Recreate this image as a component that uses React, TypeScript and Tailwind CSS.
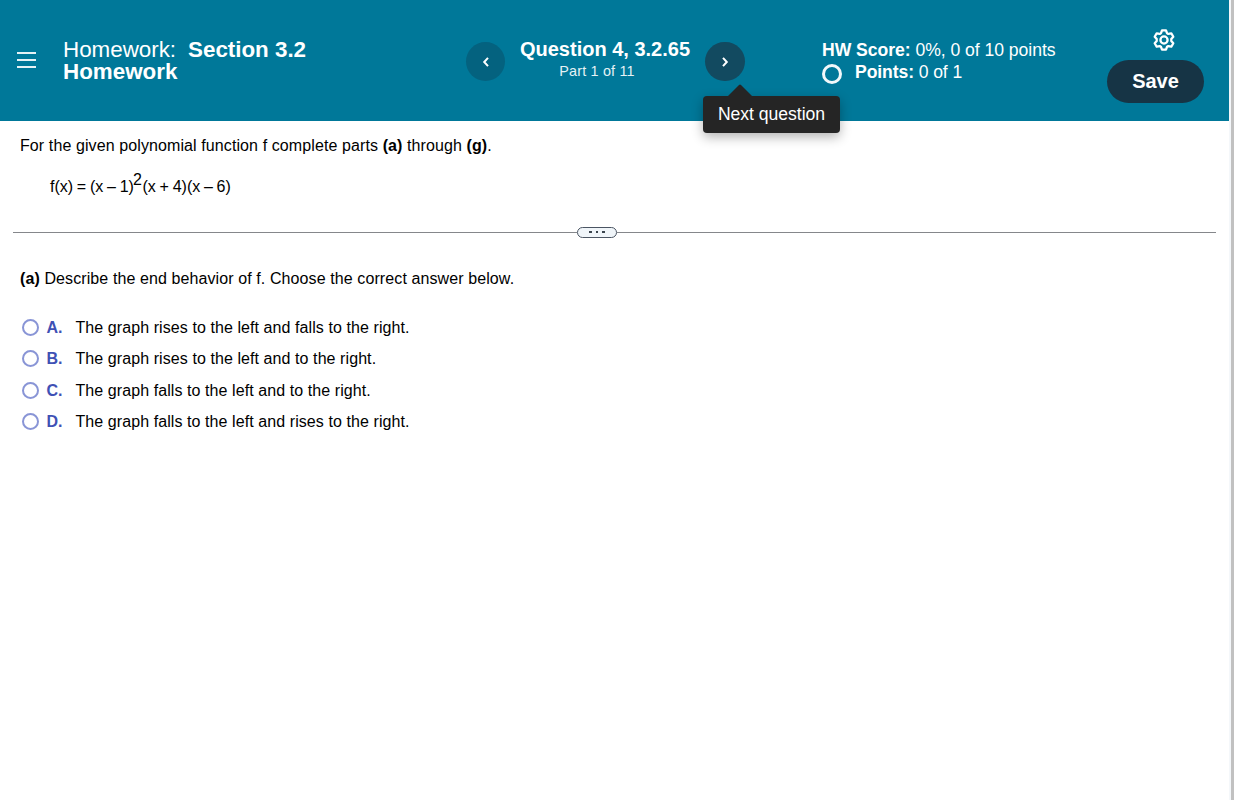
import React from 'react';

const choices = [
  { letter: 'A', text: 'The graph rises to the left and falls to the right.' },
  { letter: 'B', text: 'The graph rises to the left and to the right.' },
  { letter: 'C', text: 'The graph falls to the left and to the right.' },
  { letter: 'D', text: 'The graph falls to the left and rises to the right.' },
];

function GearIcon() {
  return (
    <svg className="w-6 h-6" viewBox="0 0 24 24" fill="none" stroke="currentColor" strokeWidth="2.3" strokeLinejoin="round">
      <path d="M10 2.300h4l1 2.900 1.300.7 3-.6 2 3.500-2 2.300v1.800l2 2.300-2 3.500-3-.6-1.300.7-1 2.900h-4l-1-2.900-1.300-.7-3 .6-2-3.500 2-2.300v-1.800l-2-2.300 2-3.500 3 .6 1.300-.7z" />
      <circle cx="12" cy="12" r="3.600" />
    </svg>
  );
}

function Header() {
  return (
    <header className="h-[121px] bg-[#007899] text-white flex items-start">
      <button className="mt-[52px] ml-[17px] w-[19px] flex flex-col gap-[5px]" aria-label="Menu">
        <span className="h-[2px] w-full bg-white/90" />
        <span className="h-[2px] w-full bg-white/90" />
        <span className="h-[2px] w-full bg-white/90" />
      </button>

      <h1 className="mt-[39px] ml-[27px] w-[403px] text-[22.4px] leading-[22px] tracking-[-0.02px]">
        Homework:<span className="ml-3 font-bold">Section 3.2</span>
        <br />
        <span className="font-bold">Homework</span>
      </h1>

      <button className="mt-[42px] w-[39px] h-[39px] rounded-full bg-[#04627f] flex items-center justify-center" aria-label="Previous question">
        <svg className="w-2 h-3" viewBox="0 0 8 12" fill="none" stroke="currentColor" strokeWidth="2">
          <path d="M6 1.800 2.200 6 6 10.200" />
        </svg>
      </button>

      <div className="mt-[37px] w-[200px] text-center whitespace-nowrap">
        <div className="text-xl leading-6 font-bold">Question 4, 3.2.65</div>
        <div className="mr-4 mt-px text-[14.4px] leading-[18px] tracking-[0.18px] text-[#e6f2f5]">Part 1 of 11</div>
      </div>

      <div className="relative mt-[42px]">
        <button className="w-10 h-[39px] rounded-full bg-[#124a60] flex items-center justify-center" aria-label="Next question">
          <svg className="w-2 h-3" viewBox="0 0 8 12" fill="none" stroke="currentColor" strokeWidth="2">
            <path d="M2 1.800 5.800 6 2 10.200" />
          </svg>
        </button>
        <div className="absolute top-[54px] left-[-2px] w-[137px] h-[37px] rounded bg-[#252525] shadow-[0_4px_12px_rgba(0,0,0,0.3)] flex items-center justify-center whitespace-nowrap text-[17.6px] tracking-[-0.03px]">
          <svg className="absolute -top-3 left-[25px] w-6 h-3" viewBox="0 0 24 12" fill="#252525">
            <path d="M0 12 11 1q1-1 2 0l11 11z" />
          </svg>
          Next question
        </div>
      </div>

      <div className="mt-[39px] ml-[77px] w-[285px] text-[17.6px] leading-[22.4px] tracking-[-0.04px] whitespace-nowrap">
        <div><b>HW Score:</b> 0%, 0 of 10 points</div>
        <div className="flex">
          <span className="mt-[3px] mr-[13px] w-5 h-5 rounded-full border-[3px] border-white/95" />
          <span className="tracking-[-0.1px]"><b>Points:</b> 0 of 1</span>
        </div>
      </div>

      <div className="mt-7 w-[97px] flex flex-col items-center">
        <button className="ml-[17px]" aria-label="Settings"><GearIcon /></button>
        <button className="mt-2 pb-[2px] w-[97px] h-[43px] rounded-full bg-[#163445] text-xl font-bold">Save</button>
      </div>
    </header>
  );
}

function Divider() {
  return (
    <div className="mt-[29px] ml-[13px] mr-[13px] h-3 flex items-center">
      <div className="w-[564px] h-px bg-[#85878b]" />
      <button className="w-10 h-[11px] rounded-full border border-[#4b5563] bg-[#f0f5f9] flex items-center justify-center gap-1" aria-label="Resize">
        <span className="w-[2.5px] h-[2.5px] bg-[#3a444d]" />
        <span className="w-[2.5px] h-[2.5px] bg-[#3a444d]" />
        <span className="w-[2.5px] h-[2.5px] bg-[#3a444d]" />
      </button>
      <div className="flex-1 h-px bg-[#85878b]" />
    </div>
  );
}

export default function App() {
  return (
    <div className="h-[800px] bg-white flex overflow-hidden text-black font-['Liberation_Sans',Arial,sans-serif]">
      <div className="w-[1229px] shrink-0">
        <Header />
        <main className="text-[16px] leading-5 whitespace-nowrap">
          <p className="mt-[15px] ml-5 tracking-[0.1px]">
            For the given polynomial function f complete parts <b>(a)</b> through <b>(g)</b>.
          </p>
          <p className="mt-[21px] ml-[50px] h-5 flex [word-spacing:-0.7px]">
            <span className="w-[83px]">f(x) = (x – 1)</span>
            <span className="-mt-[7px] w-[9.5px]">2</span>
            <span>(x + 4)(x – 6)</span>
          </p>

          <Divider />

          <p className="mt-[31px] ml-5 tracking-[0.1px]">
            <b>(a)</b> Describe the end behavior of f. Choose the correct answer below.
          </p>

          <div className="mt-[29px] ml-[22px] grid grid-rows-[31px_32px_31px_20px]">
            {choices.map((choice) => (
              <label key={choice.letter} className="h-5 flex items-start">
                <span className="mt-px w-[17px] h-[17px] rounded-full border-2 border-[#8995d6]" />
                <span className="ml-[7.5px] w-[29px] font-bold text-[#3f51b5]">{choice.letter}.</span>
                <span className="tracking-[0.08px]">{choice.text}</span>
              </label>
            ))}
          </div>
        </main>
      </div>
      <div className="w-[2px] bg-[#f4f7fa]" />
      <div className="w-[3px] bg-[#c1c1c1]" />
    </div>
  );
}
